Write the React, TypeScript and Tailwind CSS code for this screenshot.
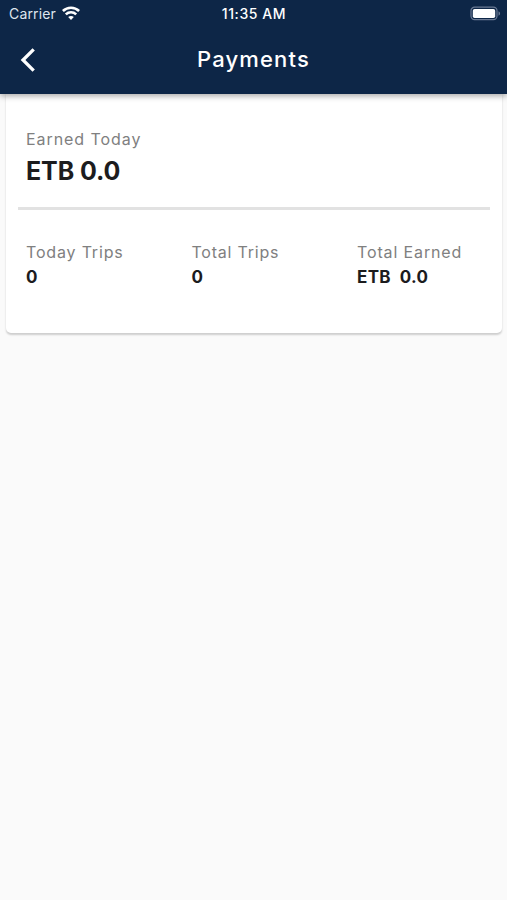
const stats = [
  { label: "Today Trips", value: "0", labelClass: "tracking-[0.82px]" },
  { label: "Total Trips", value: "0", labelClass: "tracking-[0.78px]" },
  { label: "Total Earned", value: "ETB  0.0", labelClass: "tracking-[0.87px]" },
]

function WifiIcon() {
  return (
    <svg width="18" height="14" viewBox="0 0 18 14" fill="none" stroke="white" strokeWidth="2.6" className="-mt-[2px]">
      <path d="M0.9 5C5.5 0.6 12.5 0.6 17.1 5" />
      <path d="M3.8 8.4C6.8 5.6 11.2 5.6 14.2 8.4" />
      <path d="M9 13.9L6.2 11C7.7 9.5 10.3 9.5 11.8 11Z" fill="white" stroke="none" />
    </svg>
  )
}

function BatteryIcon() {
  return (
    <svg width="31" height="15" viewBox="0 0 31 15" fill="none" className="-mt-[2px]">
      <rect x="1" y="1.2" width="26" height="12.5" rx="3.6" stroke="#6b7a94" strokeWidth="1.2" />
      <rect x="2.8" y="3" width="22.4" height="9" rx="1.8" fill="white" />
      <path d="M28.5 5.2C30.6 6 30.6 8.9 28.5 9.7Z" fill="#6b7a94" />
    </svg>
  )
}

export default function App() {
  return (
    <div className="min-h-screen bg-[#fafafa] font-['Inter',sans-serif] text-[#1c1c1e]">
      {/* Header */}
      <header className="relative z-10 h-[94px] bg-[#0d2647] text-white shadow-[0_2px_6px_rgba(0,0,0,0.35)]">
        <div className="grid h-7 grid-cols-3 items-center pl-[9px] pr-[6px] text-[14px] leading-none">
          <div className="flex items-center gap-[6px]">
            <span className="tracking-[0.15px] text-[#dfe5ee]">Carrier</span>
            <WifiIcon />
          </div>
          <span className="-ml-[2px] whitespace-nowrap text-center text-[14px] font-medium tracking-[0.6px]">
            11:35 AM
          </span>
          <div className="flex justify-end">
            <BatteryIcon />
          </div>
        </div>
        <div className="grid h-[63px] grid-cols-[56px_1fr_56px] items-center">
          <button aria-label="Back" className="pl-5">
            <svg width="16" height="26" viewBox="0 0 16 26" fill="none" stroke="white" strokeWidth="3.3">
              <path d="M13.7 2.3L3 13L13.7 23.7" />
            </svg>
          </button>
          <h1 className="-mt-px text-center text-[22px] font-medium leading-none tracking-[1.15px]">Payments</h1>
        </div>
      </header>

      {/* Earnings card */}
      <section className="mx-[6px] h-[239px] w-[496px] rounded-b-[5px] bg-white px-3 pt-[34px] shadow-[0_1.5px_2px_rgba(0,0,0,0.18)]">
        <div className="h-[79px] px-2">
          <p className="text-[16px] leading-[22px] tracking-[0.93px] text-[#808080]">Earned Today</p>
          <p className="mt-[7px] text-[25px] font-bold leading-[28px] tracking-[-0.1px]">ETB 0.0</p>
        </div>
        <div className="h-[3px] bg-[#e2e2e2]" />
        <div className="grid grid-cols-[165.5px_165.5px_1fr] pl-2 pt-[31px]">
          {stats.map((stat) => (
            <div key={stat.label} className="whitespace-pre">
              <p className={`text-[16px] leading-[22px] text-[#808080] ${stat.labelClass}`}>{stat.label}</p>
              <p className="mt-[2px] text-[17px] font-bold leading-[24px] tracking-[0.35px]">{stat.value}</p>
            </div>
          ))}
        </div>
      </section>
    </div>
  )
}
